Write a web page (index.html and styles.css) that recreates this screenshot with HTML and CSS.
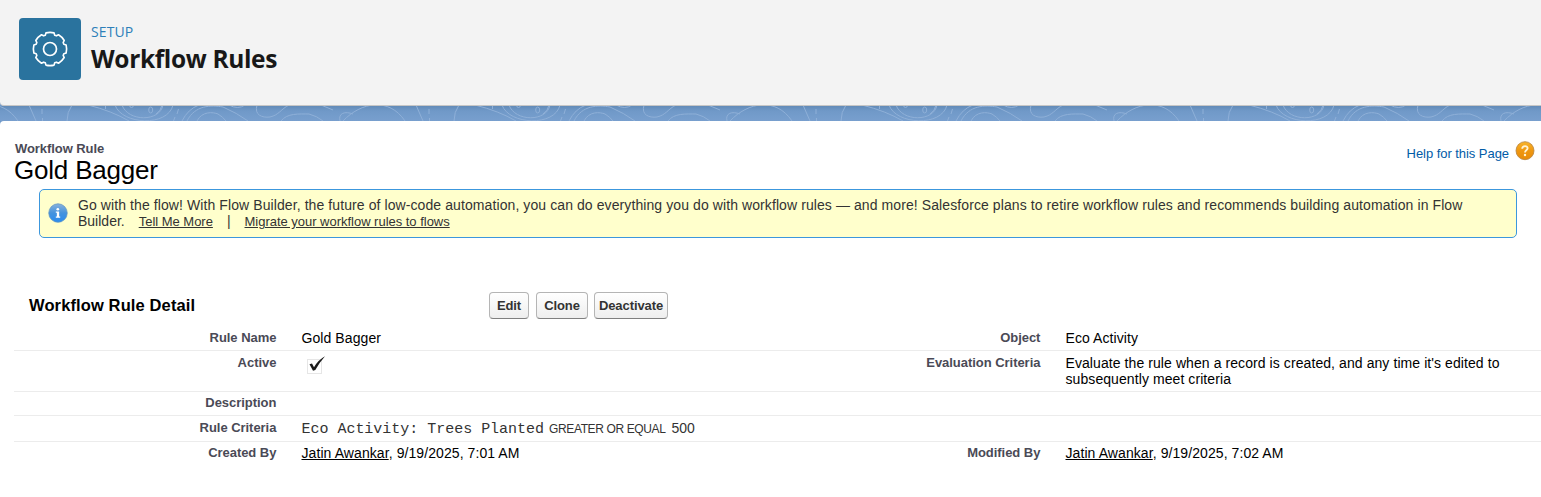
FILE: index.html
```html
<!DOCTYPE html>
<html lang="en">
<head>
<meta charset="utf-8">
<title>Workflow Rules</title>
<link rel="stylesheet" href="styles.css">
</head>
<body>
<header class="setup-header">
  <span class="setup-icon">
    <svg width="62" height="62" viewBox="0 0 62 62" fill="none" stroke="#fff" stroke-width="1.7" stroke-linejoin="round">
      <circle cx="31" cy="31" r="6.5"/>
      <path transform="translate(31 31) scale(.96)" d="M-4.200 -16.800A17.300 17.300 0 0 1 4.200 -16.800L4.900 -14.400L6.700 -13.700L8.900 -14.800A17.300 17.300 0 0 1 14.800 -8.900L13.700 -6.700L14.400 -4.900L16.800 -4.200A17.300 17.300 0 0 1 16.800 4.200L14.400 4.900L13.700 6.700L14.800 8.900A17.300 17.300 0 0 1 8.900 14.800L6.700 13.700L4.900 14.400L4.200 16.800A17.300 17.300 0 0 1 -4.200 16.800L-4.900 14.400L-6.700 13.700L-8.900 14.800A17.300 17.300 0 0 1 -14.800 8.900L-13.700 6.700L-14.400 4.900L-16.800 4.200A17.300 17.300 0 0 1 -16.800 -4.200L-14.400 -4.900L-13.700 -6.700L-14.800 -8.900A17.300 17.300 0 0 1 -8.900 -14.800L-6.700 -13.700L-4.900 -14.400Z"/>
    </svg>
  </span>
  <div class="setup-titles">
    <div class="setup-eyebrow">SETUP</div>
    <h1 class="setup-title">Workflow Rules</h1>
  </div>
</header>
<div class="strip">
  <svg width="1541" height="16" viewBox="0 0 1541 16" fill="none" stroke="#8fb0d8" stroke-width="1">
    <defs>
      <g id="contours">
        <path d="M29 0L36 16M42 4v5M42.500 13v3M72 0Q67 7 67 16M88 0Q112 6 129 16M105.500 0v4"/>
        <path d="M115 0C122 20 168 22 173 0M122 0C128 17 160 17 163 0M156 9Q161 6 162 0"/>
        <ellipse cx="150.700" cy="5" rx="2" ry="3"/>
        <ellipse cx="131.500" cy="0" rx="2" ry="2.500"/>
        <path d="M178.500 4L177 9M175 12L173.500 16M182 16Q188 4 199 0M187 16C195 0 211 0 223 2Q237 8 248 16M197 16C202 6 213 7 218 9Q223 12 226 16"/>
        <path d="M229 0Q238 5 245 0M257 0C254 10 262 13 270 12C279 10 281 4 289 0M281 16C287 8 299 9 309 9Q317 11 323 16M321 0L333 5"/>
        <path d="M340 16C338 8 345 6 353 9M343 16C361 -3 389 -8 405 16"/>
      </g>
    </defs>
    <use href="#contours" x="-387"/><use href="#contours"/><use href="#contours" x="387"/><use href="#contours" x="774"/><use href="#contours" x="1161"/>
  </svg>
</div>
<main class="content">
  <div class="page-head">
    <div>
      <div class="page-type">Workflow Rule</div>
      <h2 class="page-name">Gold Bagger</h2>
    </div>
    <a class="help"><span>Help for this Page</span>
      <svg width="20" height="20" viewBox="0 0 20 20">
        <defs><linearGradient id="orange" x2="0" y2="1"><stop stop-color="#f8b52c"/><stop offset=".5" stop-color="#ef9710"/><stop offset="1" stop-color="#e88b08"/></linearGradient></defs>
        <circle cx="10" cy="9.700" r="9" fill="url(#orange)" stroke="#b5803c" stroke-width=".8"/>
        <path d="M7.200 7.700C7.300 4.200 13 4.400 12.600 7.400C12.400 9.400 10 9.300 10 11.500" fill="none" stroke="#fff3d6" stroke-width="1.800"/>
        <circle cx="10" cy="14" r="1.200" fill="#fff3d6"/>
      </svg>
    </a>
  </div>
  <div class="notice">
    <svg class="notice-icon" width="20" height="21" viewBox="0 0 21 21">
      <defs><linearGradient id="blue" x2="0" y2="1"><stop stop-color="#8ab2dc"/><stop offset=".5" stop-color="#4593dd"/><stop offset="1" stop-color="#2a8cf0"/></linearGradient></defs>
      <circle cx="10.500" cy="10" r="9.700" fill="url(#blue)" stroke="#5f94c4" stroke-width=".8"/>
      <circle cx="10.300" cy="6" r="1.400" fill="#fff"/>
      <path d="M8.200 8.500h3.500v5.200h1.100v1.200H8.200v-1.200h1.100v-4H8.200z" fill="#fff"/>
    </svg>
    <div class="notice-text"><span class="line1">Go with the flow! With Flow Builder, the future of low-code automation, you can do everything you do with workflow rules — and more! Salesforce plans to retire workflow rules and recommends building automation in Flow</span><br><span class="notice-last">Builder.<a class="more">Tell Me More</a><span class="bar">|</span><a>Migrate your workflow rules to flows</a></span></div>
  </div>
  <div class="detail-head">
    <h3 class="detail-title">Workflow Rule Detail</h3>
    <div class="buttons"><button class="btn edit">Edit</button><button class="btn clone">Clone</button><button class="btn deactivate">Deactivate</button></div>
  </div>
  <div class="details">
    <div class="row name"><div class="label">Rule Name</div><div class="value">Gold Bagger</div><div class="label">Object</div><div class="value">Eco Activity</div></div>
    <div class="row active"><div class="label">Active</div><div class="value"><svg class="check" width="21" height="20" viewBox="0 0 21 20">
      <path d="M1.500 4.500h14v14h-14z" fill="none" stroke="#ccc" stroke-dasharray="1 1"/>
      <path d="M3.500 9.200L6 8.500L8 12.200Q12 5 19 1.200Q13 8 9.300 15L7 15.800Z" fill="#1b1b1b"/></svg></div><div class="label">Evaluation Criteria</div><div class="value">Evaluate the rule when a record is created, and any time it's edited to<br>subsequently meet criteria</div></div>
    <div class="row description"><div class="label">Description</div><div class="value"></div></div>
    <div class="row criteria"><div class="label">Rule Criteria</div><div class="value wide"><span class="field">Eco Activity: Trees Planted</span><span class="operator">GREATER OR EQUAL</span><span class="amount">500</span></div></div>
    <div class="row created"><div class="label">Created By</div><div class="value"><a>Jatin Awankar</a>, 9/19/2025, 7:01 AM</div><div class="label">Modified By</div><div class="value"><a>Jatin Awankar</a>, 9/19/2025, 7:02 AM</div></div>
  </div>
</main>
</body>
</html>
```
FILE: styles.css
```css
* { box-sizing: border-box; }
body { margin: 0; height: 497px; overflow: hidden; background: #7099c8; font-family: "Liberation Sans", Arial, sans-serif; color: #000; }
h1, h2, h3 { margin: 0; font-weight: normal; }
a { text-decoration: underline; }
.setup-header { height: 106px; padding: 18px 19px; display: flex; gap: 10px; background: #f3f3f3; border-bottom: 1px solid #c6c6c6; border-radius: 0 0 0 4px; }
.setup-icon { width: 62px; height: 62px; border-radius: 4px; background: #2a739e; }
.setup-icon svg { display: block; }
.setup-titles { padding-top: 4px; font-family: "Open Sans", "Noto Sans", sans-serif; white-space: nowrap; }
.setup-eyebrow { font-size: 14px; line-height: 20px; color: #2d7fb9; letter-spacing: .1px; }
.setup-title { font-size: 24.500px; line-height: 33px; font-weight: 700; color: #181818; letter-spacing: -.36px; }
.strip { height: 15px; background: linear-gradient(#628bb8, #7099c8 5px, #789fce); overflow: hidden; }
.strip svg { display: block; margin-top: -1px; }
.content { height: 376px; background: #fff; border-radius: 4px 0 0 0; }
.page-head { height: 68px; padding: 20px 6px 0 15px; display: flex; justify-content: space-between; align-items: flex-start; }
.page-type { font-size: 13px; line-height: 15px; font-weight: 700; color: #4a4a56; letter-spacing: -.07px; }
.page-name { margin-left: -1px; font-size: 26px; line-height: 28px; letter-spacing: -.2px; }
.help { display: flex; gap: 6px; color: #015ba7; font-size: 13px; line-height: 26px; letter-spacing: -.05px; text-decoration: none; }
.notice { width: 1478px; height: 49px; margin-left: 39px; padding: 7px 8px; display: flex; gap: 10px; background: #ffffcc; border: 1px solid #3c97dd; border-radius: 5px; color: #333; }
.notice-icon { margin-top: 6px; flex: none; }
.notice-text { font-size: 14px; line-height: 16px; white-space: nowrap; }
.line1 { letter-spacing: .09px; }
.notice-last a { font-size: 13px; letter-spacing: -.02px; }
.more { margin-left: 14px; }
.bar { margin: 0 14px; }
.detail-head { margin-top: 54px; height: 37px; padding-left: 29px; display: flex; align-items: flex-start; }
.detail-title { width: 460px; font-size: 16.500px; line-height: 27px; font-weight: 700; letter-spacing: .12px; }
.buttons { display: flex; }
.btn { height: 27px; padding: 0; font: 700 13px "Liberation Sans", Arial, sans-serif; letter-spacing: -.08px; color: #333; background: linear-gradient(#fff, #eee); border: 1px solid #b5b5b5; border-bottom-color: #7f7f7f; border-radius: 4px; }
.edit { width: 40px; margin-right: 7px; }
.clone { width: 52px; margin-right: 6px; }
.deactivate { width: 74px; }
.details { margin-left: 14px; }
.row { display: grid; grid-template-columns: 262px 475px 289px 1fr; border-bottom: 1px solid #ececec; }
.label { font-size: 13px; line-height: 15px; font-weight: 700; color: #4a4a56; text-align: right; padding-top: 1px; letter-spacing: -.04px; margin-right: -.4px; }
.value { font-size: 14px; line-height: 16px; padding: 1px 0 0 25.500px; white-space: nowrap; letter-spacing: .08px; }
.name { height: 22px; }
.active { height: 41px; padding-top: 3px; }
.description { height: 24px; padding-top: 2px; }
.criteria { height: 26px; padding-top: 3px; }
.created { padding-top: 2px; border: 0; }
.check { display: block; margin-left: 4px; }
.wide { grid-column: 2 / -1; color: #333; }
.field { font: 15px "Liberation Mono", "Courier New", monospace; letter-spacing: -.02px; }
.operator { font-size: 12px; letter-spacing: -.37px; margin: 0 6px 0 5px; }
.amount { letter-spacing: 0; }
```
